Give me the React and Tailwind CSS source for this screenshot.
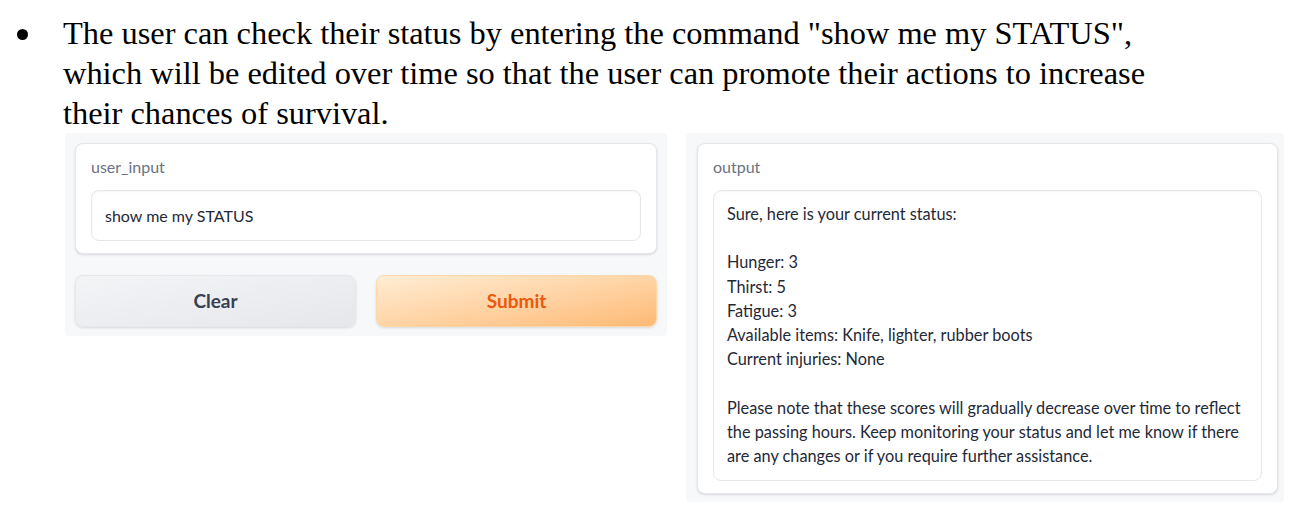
export default function App() {
  const serif = { fontFamily: '"Liberation Serif", "Times New Roman", serif' };
  return (
    <div className="w-[1313px] h-[522px] bg-white relative overflow-hidden">
      <div className="flex pt-[13px]" style={serif}>
        <div className="w-[63px] pl-[17px] pt-[16px]">
          <div className="w-[11px] h-[11px] rounded-full bg-black"></div>
        </div>
        <div className="text-[32.4px] leading-[40px] text-black w-[1240px] whitespace-nowrap">
          The user can check their status by entering the command "show me my STATUS",
          <br />
          which will be edited over time so that the user can promote their actions to increase
          <br />
          their chances of survival.
        </div>
      </div>
      <div
        className="flex items-start pl-[65px] gap-[19px] text-[16px]"
        style={{ fontFamily: 'Lato, "Noto Sans", sans-serif' }}
      >
        <div className="w-[602px] bg-[#f7f8fa] p-[10px] pb-[9px] rounded-[4px] flex flex-col gap-[21px]">
          <div className="bg-white border border-[#e5e7eb] rounded-[8px] shadow-sm px-[15px] pt-[12px] pb-[12px]">
            <div className="text-[#6b7280] leading-[22px]">user_input</div>
            <div className="mt-[12px] border border-[#e5e7eb] rounded-[8px] h-[51px] flex items-center px-[13px] text-[#1f2937] shadow-[inset_0_1px_2px_rgba(0,0,0,0.04)]">
              show me my STATUS
            </div>
          </div>
          <div className="flex gap-[20px]">
            <button className="flex-1 h-[52px] rounded-[8px] bg-gradient-to-br from-[#f3f4f6] to-[#e5e7eb] border border-[#e5e7eb] text-[#374151] font-bold text-[19px] shadow-sm">
              Clear
            </button>
            <button className="flex-1 h-[52px] rounded-[8px] bg-gradient-to-br from-[#ffedd5] to-[#fdba74] border border-[#fed7aa] text-[#ea580c] font-bold text-[19px] shadow-sm">
              Submit
            </button>
          </div>
        </div>
        <div className="w-[598px] bg-[#f7f8fa] pl-[11px] pr-[6px] pt-[10px] pb-[8px] rounded-[4px]">
          <div className="bg-white border border-[#e5e7eb] rounded-[8px] shadow-sm px-[15px] pt-[12px] pb-[12px]">
            <div className="text-[#6b7280] leading-[22px]">output</div>
            <div className="mt-[12px] border border-[#e5e7eb] rounded-[8px] px-[13px] pt-[11px] pb-[12px] text-[#1f2937] text-[16.3px] leading-[24.2px] shadow-[inset_0_1px_2px_rgba(0,0,0,0.04)]">
              <div>Sure, here is your current status:</div>
              <div className="h-[24.2px]"></div>
              <div>Hunger: 3</div>
              <div>Thirst: 5</div>
              <div>Fatigue: 3</div>
              <div>Available items: Knife, lighter, rubber boots</div>
              <div>Current injuries: None</div>
              <div className="h-[24.2px]"></div>
              <div>
                Please note that these scores will gradually decrease over time to reflect
                <br />
                the passing hours. Keep monitoring your status and let me know if there
                <br />
                are any changes or if you require further assistance.
              </div>
            </div>
          </div>
        </div>
      </div>
    </div>
  );
}
